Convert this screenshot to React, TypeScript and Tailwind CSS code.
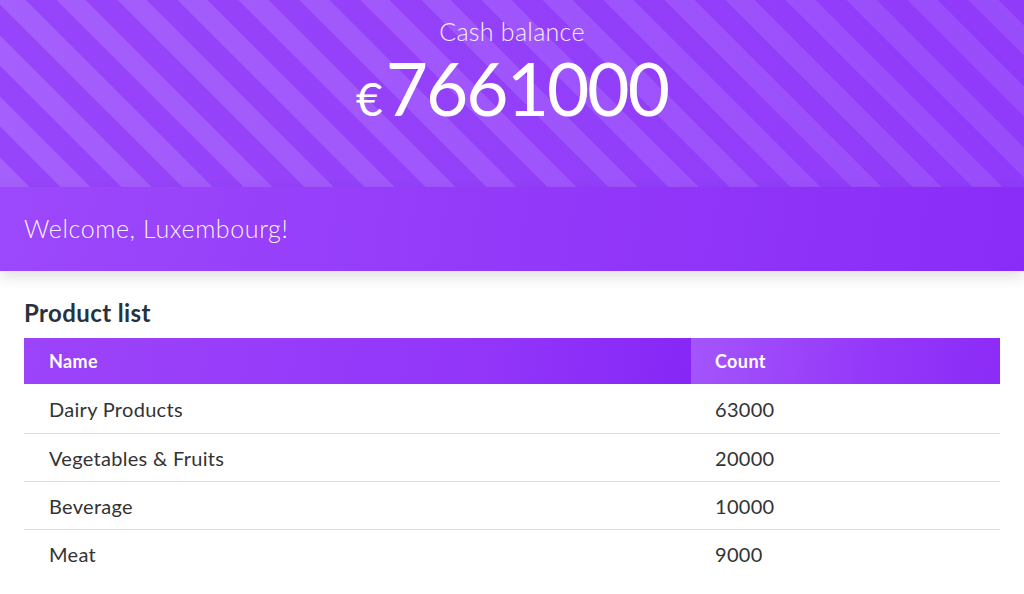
import React from "react";

const products = [
  { name: "Dairy Products", count: 63000 },
  { name: "Vegetables & Fruits", count: 20000 },
  { name: "Beverage", count: 10000 },
  { name: "Meat", count: 9000 },
];

export default function App() {
  return (
    <div className="w-[1024px] h-[594px] bg-white overflow-hidden font-['Lato','Noto_Sans',sans-serif]">
      {/* Balance header with stripes */}
      <div className="h-[187px] flex flex-col items-center bg-[image:linear-gradient(90deg,rgba(150,70,250,0)_0%,rgba(130,40,248,0.35)_100%),repeating-linear-gradient(45deg,#a55ffc_0px,#a55ffc_21px,#9745fa_21px,#9745fa_43px)]">
        <div className="mt-[16px] text-[25px] font-light tracking-[0.3px] text-white/90 leading-[30px]">Cash balance</div>
        <div className="flex items-baseline text-white leading-none mt-[6px]">
          <span className="text-[46px] font-normal mr-[3px]">€</span>
          <span className="text-[73px] font-normal tracking-[-2px]">7661000</span>
        </div>
      </div>

      {/* Welcome bar */}
      <div className="relative z-10 h-[84px] flex items-center px-6 shadow-[0_6px_14px_rgba(0,0,0,0.12)] bg-[image:linear-gradient(100deg,#9c48fb_0%,#9238f9_55%,#8a2cf8_100%)]">
        <span className="text-[25px] font-light tracking-[0.6px] text-white/95">Welcome, Luxembourg!</span>
      </div>

      {/* Product list */}
      <div className="px-6 pt-[28px]">
        <h2 className="text-[24px] font-bold tracking-[0.4px] text-[#28323d] leading-[28px] mb-[11px]">Product list</h2>
        <div className="w-[976px]">
          <div className="flex h-[46px] text-white text-[18px] font-bold tracking-[0.4px]">
            <div className="w-[667px] flex items-center pl-[25px] bg-[image:linear-gradient(100deg,#9c44fa_0%,#9235f9_70%,#8627f6_100%)]">Name</div>
            <div className="flex-1 flex items-center pl-[24px] bg-[image:linear-gradient(100deg,#a455fb_0%,#9437f9_60%,#8b2bf6_100%)]">Count</div>
          </div>
          {products.map((p, i) => (
            <div
              key={p.name}
              className={`flex ${i === 0 ? "h-[50px]" : "h-[48px]"} items-center text-[20px] tracking-[0.3px] text-[#333333] ${i < products.length - 1 ? "border-b border-[#dddddd]" : ""}`}
            >
              <div className="w-[667px] pl-[25px]">{p.name}</div>
              <div className="flex-1 pl-[24px]">{p.count}</div>
            </div>
          ))}
        </div>
      </div>
    </div>
  );
}
